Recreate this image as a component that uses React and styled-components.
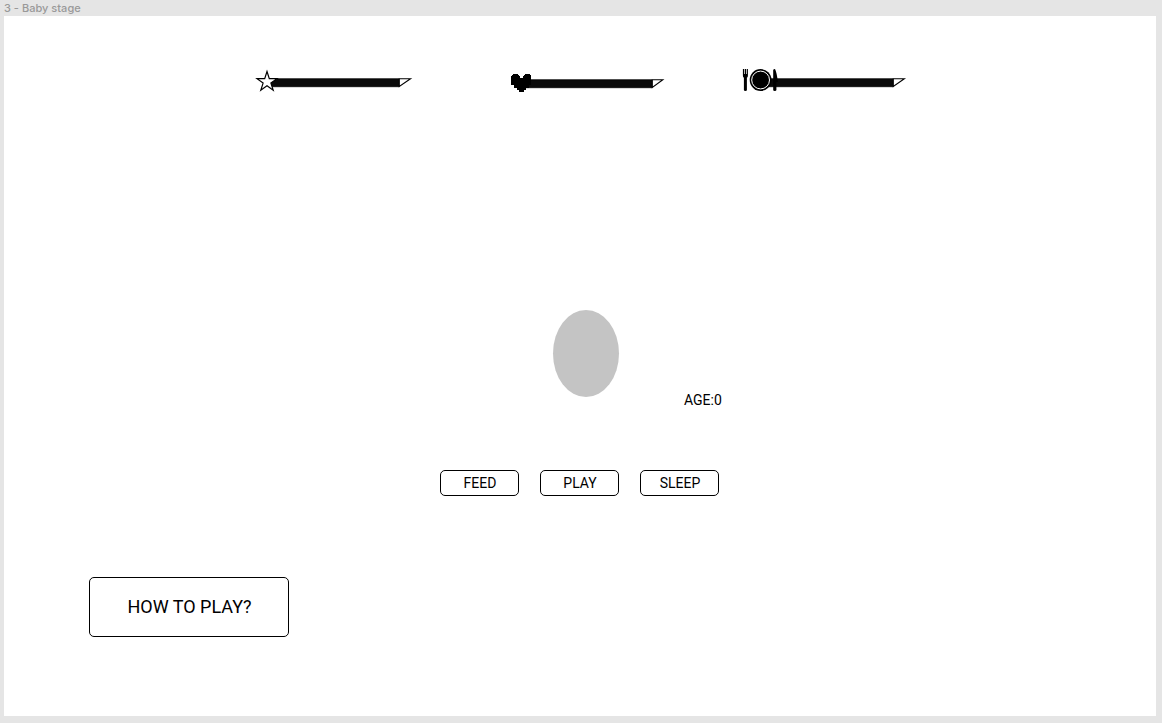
import React from "react";
import styled, { createGlobalStyle } from "styled-components";

const GlobalStyle = createGlobalStyle`
  * { box-sizing: border-box; }
  body { margin: 0; background: #e5e5e5; font-family: Roboto, sans-serif; color: #000; }
`;

const Canvas = styled.div`
  width: 1162px;
  height: 723px;
  padding: 0 6px 7px 4px;
  display: flex;
  flex-direction: column;
  overflow: hidden;
`;

const FrameLabel = styled.div`
  height: 16px;
  font: 500 11px/16px Inter, sans-serif;
  letter-spacing: 0.02px;
  color: #999;
`;

const Frame = styled.main`
  flex: 1;
  background: #fff;
  display: flex;
  flex-direction: column;
`;

const Meters = styled.header`
  display: flex;
  gap: 87px;
  padding: 50px 0 0 250px;
  height: 80px;
`;

const Meter = styled.svg`
  display: block;
  flex: none;
  width: ${(p) => p.$width}px;
  height: 30px;
  overflow: visible;
`;

const Nursery = styled.section`
  display: flex;
  align-items: flex-end;
  gap: 65px;
  padding: 214px 0 0 549px;
`;

const Egg = styled.div`
  width: 66px;
  height: 87px;
  margin-bottom: 12px;
  border-radius: 50%;
  background: #c4c4c4;
`;

const Age = styled.span`
  font-size: 14px;
  line-height: 16px;
  margin-bottom: 1px;
`;

const Actions = styled.nav`
  display: flex;
  gap: 21px;
  padding: 61px 0 0 436px;
`;

const Button = styled.button`
  width: 79px;
  height: 26px;
  padding: 0 0 0 1px;
  border: 1px solid #000;
  border-radius: 5px;
  background: #fff;
  color: #000;
  font: 400 14px/16px Roboto, sans-serif;
`;

const HelpButton = styled(Button)`
  width: 200px;
  height: 60px;
  margin: 81px 0 0 85px;
  padding-bottom: 2px;
  font-size: 18px;
  line-height: 21px;
`;

function Pencil({ x, y, end, tip }) {
  return (
    <g>
      <rect x={x} y={y} width={end - x} height="8" fill="#0a0a0a" />
      <path d={`M${x} ${y + 0.1}H${end}M${x} ${y + 8}H${end}`} stroke="#000" strokeWidth="0.8" />
      <path
        d={`M${end} ${y + 0.1}H${end + tip}L${end} ${y + 7.7}Z`}
        fill="#fff"
        stroke="#000"
        strokeWidth="1.1"
      />
    </g>
  );
}

function StarMeter() {
  return (
    <Meter $width={160} viewBox="0 0 160 30">
      <Pencil x={15} y={12.7} end={145.3} tip={11.2} />
      <path
        d="M13 5.5L15.3 12.7H23L16.9 17.1L19.2 24.2L13 19.8L6.8 24.2L9.1 17.1L3 12.7H10.7Z"
        fill="#fff"
        stroke="#000"
        strokeWidth="1.2"
      />
    </Meter>
  );
}

function HeartMeter() {
  return (
    <Meter $width={160} viewBox="0 0 160 30">
      <Pencil x={20} y={13.7} end={151.3} tip={10.5} />
      <path
        d="M12 8H17V9H18V10H19V12H22V10H23V9H24V8H29V9H30V19H28V22H25V24H23V26H18V24H16V22H13V19H10V10H11V9H12Z"
        fill="#000"
      />
    </Meter>
  );
}

function FoodMeter() {
  return (
    <Meter $width={170} viewBox="0 0 170 30">
      <Pencil x={21} y={12.7} end={145.3} tip={11} />
      <circle cx="12.6" cy="14" r="10.9" fill="#000" />
      <circle cx="12.6" cy="14" r="8.9" fill="none" stroke="#fff" strokeWidth="1" />
      <path
        d="M-5.100 3h1.200v5h.7V3h1.200v5h.7V3H-.100v6.500q0 1.800-1 2.300V24q0 1-1.500 1t-1.500-1V11.800Q-5.100 11.300-5.100 9.500Z"
        fill="#000"
      />
      <path d="M25.2 4Q25.500 3 27 3Q29 7 29.8 16H28.400V24Q28.400 25 26.800 25T25.200 24Z" fill="#000" />
    </Meter>
  );
}

export default function App() {
  return (
    <>
      <GlobalStyle />
      <Canvas>
        <FrameLabel>3 - Baby stage</FrameLabel>
        <Frame>
          <Meters>
            <StarMeter />
            <HeartMeter />
            <FoodMeter />
          </Meters>
          <Nursery>
            <Egg />
            <Age>AGE:0</Age>
          </Nursery>
          <Actions>
            <Button>FEED</Button>
            <Button>PLAY</Button>
            <Button>SLEEP</Button>
          </Actions>
          <HelpButton>HOW TO PLAY?</HelpButton>
        </Frame>
      </Canvas>
    </>
  );
}
